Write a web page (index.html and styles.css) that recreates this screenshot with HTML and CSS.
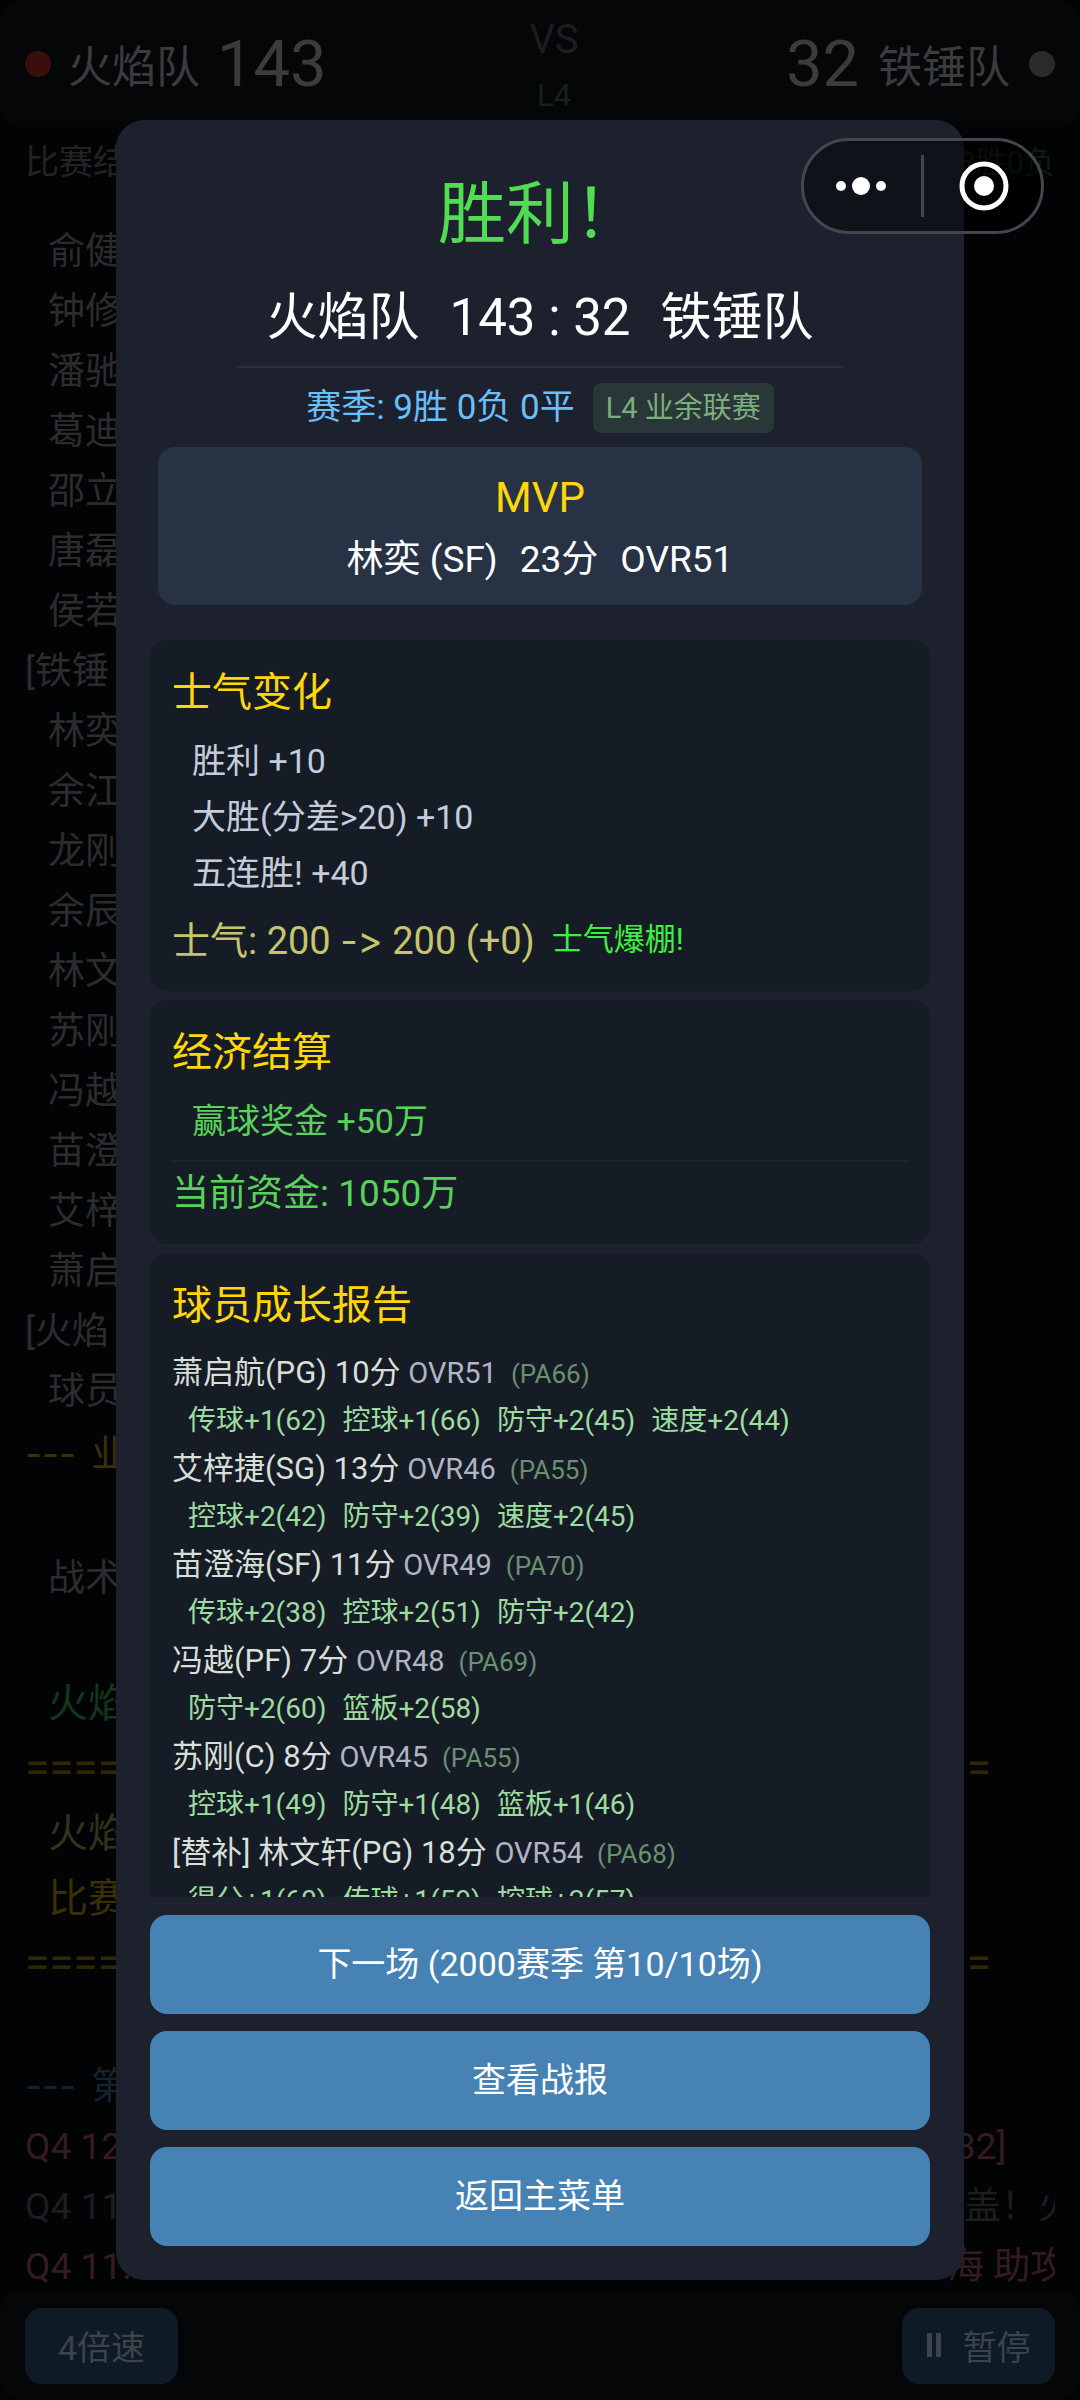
FILE: index.html
```html
<!DOCTYPE html>
<html lang="zh-CN">
<head>
<meta charset="utf-8">
<meta name="viewport" content="width=device-width, initial-scale=1">
<title>比赛结果</title>
<link rel="stylesheet" href="styles.css">
</head>
<body>
<div class="game">
  <header class="scoreboard">
    <div class="team"><span class="dot dot-home"></span><span class="team-name">火焰队</span><span class="team-score">143</span></div>
    <div class="versus"><span class="vs">VS</span><span class="league">L4</span></div>
    <div class="team team-away"><span class="team-score">32</span><span class="team-name">铁锤队</span><span class="dot dot-away"></span></div>
  </header>
  <div class="status"><span>比赛结</span><span class="record">8胜0负</span></div>
  <main class="log">
    <p class="line in">俞健</p>
    <p class="line in">钟修</p>
    <p class="line in">潘驰</p>
    <p class="line in">葛迪</p>
    <p class="line in">邵立</p>
    <p class="line in">唐磊</p>
    <p class="line in">侯若</p>
    <p class="line">[铁锤</p>
    <p class="line in">林奕</p>
    <p class="line in">余江</p>
    <p class="line in">龙刚</p>
    <p class="line in">余辰</p>
    <p class="line in">林文</p>
    <p class="line in">苏刚</p>
    <p class="line in">冯越</p>
    <p class="line in">苗澄</p>
    <p class="line in">艾梓</p>
    <p class="line in">萧启</p>
    <p class="line">[火焰</p>
    <p class="line in">球员</p>
    <p class="line tall gold"><span class="dash">---</span> 业</p>
    <p class="line tall in after-gap">战术</p>
    <p class="line big in green after-gap">火焰</p>
    <p class="line big rule">========================================</p>
    <p class="line big in khaki">火焰</p>
    <p class="line big in gold">比赛</p>
    <p class="line big rule">========================================</p>
    <p class="line blue after-gap"><span class="dash">---</span> 第</p>
    <p class="line red play"><span>Q4 12</span><span class="tail tail-score">32]</span></p>
    <p class="line dim play"><span>Q4 11</span><span class="tail tail-in">盖！火</span></p>
    <p class="line red play"><span>Q4 11.</span><span class="tail">海 助攻</span></p>
  </main>
  <footer class="controls">
    <button class="ctl" type="button">4倍速</button>
    <button class="ctl" type="button"><svg class="pause" viewBox="0 0 14 24" aria-hidden="true"><path d="M0 0h5v24H0zM9 0h5v24H9z"/></svg>暂停</button>
  </footer>
</div>

<div class="overlay">
  <section class="modal" role="dialog" aria-labelledby="result">
    <div class="summary">
      <h1 class="result" id="result">胜利！</h1>
      <div class="final"><span>火焰队</span><span>143 : 32</span><span>铁锤队</span></div>
      <div class="season"><span>赛季: 9胜 0负 0平</span><span class="tag">L4 业余联赛</span></div>
      <div class="mvp">
        <h2 class="mvp-title">MVP</h2>
        <p class="mvp-line"><span>林奕 (SF)</span><span>23分</span><span>OVR51</span></p>
      </div>
    </div>
    <div class="report">
      <section class="card">
        <h2 class="card-title">士气变化</h2>
        <ul class="items">
          <li>胜利 +10</li>
          <li>大胜(分差&gt;20) +10</li>
          <li>五连胜! +40</li>
        </ul>
        <p class="total morale"><span>士气: 200 <span class="arrow">-&gt;</span> 200 (+0)</span><span class="burst">士气爆棚!</span></p>
      </section>
      <section class="card">
        <h2 class="card-title">经济结算</h2>
        <ul class="items income">
          <li>赢球奖金 +50万</li>
        </ul>
        <p class="total funds">当前资金: 1050万</p>
      </section>
      <section class="card">
        <h2 class="card-title">球员成长报告</h2>
        <dl class="growth">
          <dt>萧启航(PG) 10分 <span class="ovr">OVR51</span><span class="pa">(PA66)</span></dt>
          <dd><span>传球+1(62)</span><span>控球+1(66)</span><span>防守+2(45)</span><span>速度+2(44)</span></dd>
          <dt>艾梓捷(SG) 13分 <span class="ovr">OVR46</span><span class="pa">(PA55)</span></dt>
          <dd><span>控球+2(42)</span><span>防守+2(39)</span><span>速度+2(45)</span></dd>
          <dt>苗澄海(SF) 11分 <span class="ovr">OVR49</span><span class="pa">(PA70)</span></dt>
          <dd><span>传球+2(38)</span><span>控球+2(51)</span><span>防守+2(42)</span></dd>
          <dt>冯越(PF) 7分 <span class="ovr">OVR48</span><span class="pa">(PA69)</span></dt>
          <dd><span>防守+2(60)</span><span>篮板+2(58)</span></dd>
          <dt>苏刚(C) 8分 <span class="ovr">OVR45</span><span class="pa">(PA55)</span></dt>
          <dd><span>控球+1(49)</span><span>防守+1(48)</span><span>篮板+1(46)</span></dd>
          <dt>[替补] 林文轩(PG) 18分 <span class="ovr">OVR54</span><span class="pa">(PA68)</span></dt>
          <dd><span>得分+1(60)</span><span>传球+1(59)</span><span>控球+2(57)</span></dd>
        </dl>
      </section>
    </div>
    <div class="actions">
      <button class="action" type="button">下一场 (2000赛季 第10/10场)</button>
      <button class="action" type="button">查看战报</button>
      <button class="action" type="button">返回主菜单</button>
    </div>
  </section>
</div>

<div class="capsule">
  <button class="capsule-btn" type="button" aria-label="更多"><svg width="54" height="54" viewBox="0 0 54 54"><circle cx="5" cy="27" r="5"/><circle cx="25" cy="27" r="9"/><circle cx="45" cy="27" r="5"/></svg></button>
  <button class="capsule-btn target" type="button" aria-label="关闭"><svg width="54" height="54" viewBox="0 0 54 54"><circle cx="28" cy="27" r="22" fill="none" stroke="#fff" stroke-width="5"/><circle cx="28" cy="27" r="10"/></svg></button>
</div>
</body>
</html>
```
FILE: styles.css
```css
* { box-sizing: border-box; }
body, h1, h2, p, ul, dl, dd { margin: 0; padding: 0; }
h1, h2 { font-weight: 400; }
ul { list-style: none; }
body {
  background: #020305;
  color: #fff;
  font-family: Roboto, "Noto Sans CJK SC", sans-serif;
}
button { font: inherit; border: 0; padding: 0; color: inherit; }

/* match screen behind the dialog */
.game {
  height: 100vh;
  display: flex;
  flex-direction: column;
  overflow: hidden;
  color: #2b2c2e;
}
.scoreboard {
  height: 127px;
  flex: none;
  display: grid;
  grid-template-columns: 1fr auto 1fr;
  align-items: center;
  padding: 0 25px;
  background: #050608;
  border-radius: 20px;
  color: #3a3b3c;
}
.team { display: flex; align-items: center; gap: 17px; }
.team-away { justify-content: flex-end; gap: 19px; }
.team-name { font-size: 44px; }
.team-score { font-size: 65px; }
.dot { width: 26px; height: 26px; border-radius: 50%; }
.dot-home { background: #3b0e0c; }
.dot-away { background: #2b2b2b; }
.versus {
  display: flex;
  flex-direction: column;
  align-items: center;
  gap: 20px;
  padding: 4px 0 0 28px;
  color: #1c1d20;
}
.vs { font-size: 40px; line-height: 40px; }
.league { font-size: 31px; line-height: 32px; color: #182219; }
.status {
  display: flex;
  justify-content: space-between;
  flex: none;
  align-items: center;
  height: 64px;
  padding: 0 25px;
  font-size: 34px;
  color: #222325;
}
.record { font-size: 31px; color: #0c1e10; }
.log {
  flex: 1;
  min-height: 0;
  margin: 31px 25px 0;
  overflow: hidden;
}
.line { font-size: 37px; line-height: 60px; white-space: nowrap; }
.in { padding-left: 23px; }
.tall { line-height: 64px; }
.big { line-height: 65px; font-size: 40px; }
.after-gap { margin-top: 60px; }
.rule { font-size: 44px; color: #302804; }
.gold { color: #3a3004; }
.green { color: #12371a; }
.khaki { color: #33321a; }
.blue { color: #14242e; }
.red { color: #351b1f; }
.dim { color: #1c1d1f; }
.dash { margin-right: 6px; font-family: Inter, sans-serif; }
.play { display: grid; grid-template-columns: 1fr 108px; }
.tail-in { padding-left: 17px; }
.tail-score { padding-left: 8px; }
.controls {
  flex: none;
  display: flex;
  justify-content: space-between;
  align-items: center;
  height: 108px;
  padding: 0 25px;
  background: #050608;
  border-radius: 20px;
}
.ctl {
  display: flex;
  align-items: center;
  justify-content: center;
  gap: 22px;
  width: 153px;
  height: 76px;
  padding-bottom: 2px;
  border-radius: 17px;
  background: #0e1a26;
  color: #3b434b;
  font-size: 34px;
}
.pause { width: 14px; height: 24px; fill: currentColor; }

/* result dialog */
.overlay {
  position: fixed;
  inset: 0;
  display: flex;
  align-items: center;
  justify-content: center;
  padding: 5vh 0;
}
.modal {
  width: 848px;
  max-width: 92%;
  height: 100%;
  display: flex;
  flex-direction: column;
  padding: 34px;
  border-radius: 28px;
  background: #1c212d;
}
.summary { flex: none; padding: 0 8px; text-align: center; }
.result { font-size: 68px; line-height: 122px; color: #51dc51; }
.final {
  display: flex;
  justify-content: center;
  gap: 30px;
  width: 79%;
  margin: 0 auto;
  padding-bottom: 6px;
  border-bottom: 2px solid #2a303b;
  font-size: 51px;
  line-height: 84px;
}
.season {
  display: flex;
  justify-content: center;
  align-items: center;
  gap: 18px;
  margin: 15px 0 14px;
  font-size: 35px;
  line-height: 50px;
  color: #69bff7;
}
.tag {
  padding: 0 13px;
  border-radius: 8px;
  background: #2a3739;
  color: #7cae7d;
  font-size: 29px;
}
.mvp { padding: 19px 18px; height: 158px; border-radius: 17px; background: #273245; }
.mvp-title { font-size: 42px; line-height: 64px; color: #ffd60a; }
.mvp-line {
  display: flex;
  justify-content: center;
  gap: 22px;
  font-size: 37px;
  line-height: 60px;
}
.report {
  flex: 1;
  min-height: 0;
  display: flex;
  flex-direction: column;
  gap: 9px;
  margin: 35px 0 18px;
  overflow: hidden;
}
.card { flex: none; padding: 23px 22px 18px; border-radius: 17px; background: #161c25; }
.card-title { font-size: 40px; line-height: 60px; color: #ffd60a; }
.items { padding: 10px 20px 7px; font-size: 34px; line-height: 56px; color: #c4ccdc; }
.income { padding-bottom: 11px; color: #59d25b; }
.total { font-size: 37px; line-height: 64px; }
.morale { display: flex; gap: 17px; font-size: 38px; color: #c6c46e; }
.arrow { font-family: Inter, sans-serif; font-variant-ligatures: none; font-feature-settings: "calt" 0; }
.burst { font-size: 31px; color: #3cf03f; }
.funds { border-top: 2px solid #1e222c; color: #59d25b; }
.growth { padding-top: 13px; line-height: 48px; }
.growth dt { font-size: 31px; height: 48px; color: #d6dfd8; white-space: nowrap; }
.growth dd {
  display: flex;
  gap: 16px;
  padding-left: 16px;
  font-size: 28px;
  color: #9ddc9f;
}
.ovr { font-size: 29px; color: #b0b4c4; }
.pa { margin-left: 14px; font-size: 26px; color: #6a9070; }
.actions { flex: none; display: flex; flex-direction: column; gap: 17px; }
.action { height: 99px; padding-bottom: 6px; border-radius: 17px; background: #4682b4; font-size: 34px; }

/* mini-program capsule */
.capsule {
  position: fixed;
  top: 138px;
  right: 36px;
  display: flex;
  align-items: center;
  width: 243px;
  height: 96px;
  border: 3px solid #43464c;
  border-radius: 48px;
  background: rgba(0, 0, 0, .45);
}
.capsule-btn {
  flex: 1;
  display: flex;
  align-items: center;
  justify-content: center;
  height: 62px;
  background: none;
}
.capsule-btn svg { fill: #fff; }
.target { border-left: 3px solid #43464c; }
```
